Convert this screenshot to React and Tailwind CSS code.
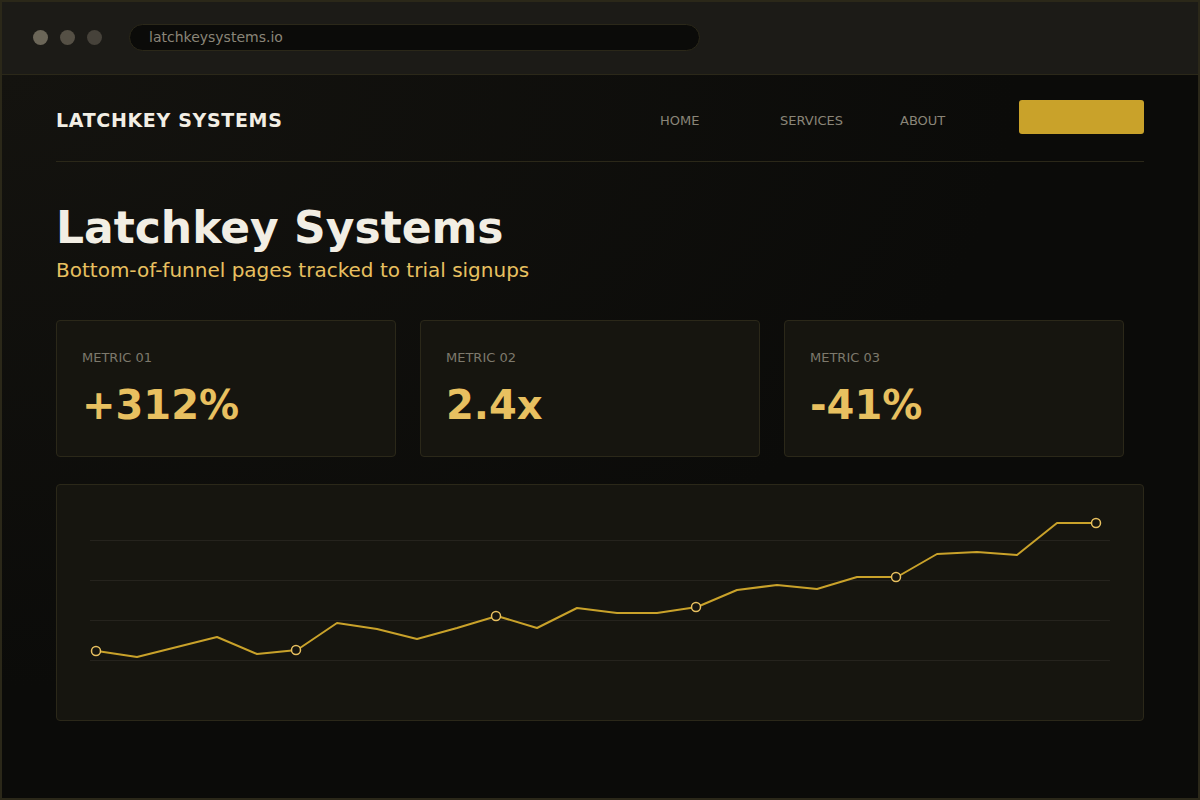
import React from 'react';

const FONT = { fontFamily: '"DejaVu Sans", "Liberation Sans", sans-serif' };

const NAV = ['HOME', 'SERVICES', 'ABOUT'];

const METRICS = [
  { label: 'METRIC 01', value: '+312%' },
  { label: 'METRIC 02', value: '2.4x' },
  { label: 'METRIC 03', value: '-41%' },
];

// signups per week, already in chart pixels (y grows downward)
const SERIES = [
  166, 172, 162, 152, 169, 165, 138, 144, 154, 143, 131, 143, 123,
  128, 128, 122, 105, 100, 104, 92, 92, 69, 67, 70, 38, 38,
];

function TrendChart() {
  const pts = SERIES.map((y, i) => [40 + i * 40, y]);
  const d = pts.map(([x, y], i) => `${i ? 'L' : 'M'}${x} ${y}`).join(' ');
  return (
    <svg width="1086" height="234" viewBox="0 0 1086 234" className="block">
      {[55, 95, 135, 175].map((y) => (
        <line key={y} x1="33" x2="1053" y1={y + 0.5} y2={y + 0.5} stroke="#25231d" strokeWidth="1" />
      ))}
      <path d={d} fill="none" stroke="#c9a22a" strokeWidth="2" strokeLinejoin="round" />
      {pts
        .filter((_, i) => i % 5 === 0)
        .map(([x, y]) => (
          <circle key={x} cx={x - 1} cy={y} r="4.5" fill="#16150f" stroke="#e8c060" strokeWidth="1.5" />
        ))}
    </svg>
  );
}

export default function App() {
  return (
    <div
      className="w-[1200px] h-[800px] overflow-hidden border-2 border-[#2b2819] bg-[#0b0b09] flex flex-col"
      style={FONT}
    >
      {/* browser chrome */}
      <div className="h-[73px] shrink-0 bg-[#1c1b17] border-b border-[#2b2819] flex items-center px-[31px] pb-[2px]">
        <div className="flex gap-[12px]">
          <span className="w-[15px] h-[15px] rounded-full bg-[#6b6658]" />
          <span className="w-[15px] h-[15px] rounded-full bg-[#555045]" />
          <span className="w-[15px] h-[15px] rounded-full bg-[#46423a]" />
        </div>
        <div className="ml-[27px] w-[571px] h-[27px] rounded-full bg-[#0b0b09] border border-[#2b2819] flex items-center pl-[19px] text-[14px] text-[#8a8578]">
          latchkeysystems.io
        </div>
      </div>

      <div className="flex-1 bg-[radial-gradient(ellipse_at_top_left,#14130f_0%,#0b0b09_60%)] px-[54px]">
        {/* site header */}
        <div className="flex items-center justify-between pt-[25px] pb-[26px] border-b border-[#2b2819]">
          <div className="pt-[6px] text-[19px] font-bold tracking-[0.035em] text-[#f2eee4]">LATCHKEY SYSTEMS</div>
          <div className="flex items-center">
            {NAV.map((n) => (
              <div key={n} className="w-[120px] pt-[6px] pl-px text-[13px] text-[#8a8578]">{n}</div>
            ))}
            <button className="w-[125px] h-[34px] rounded-[3px] bg-[#c9a22a]" />
          </div>
        </div>

        {/* hero */}
        <h1 className="mt-[39px] text-[44px] leading-[54px] font-bold text-[#f2eee4]">Latchkey Systems</h1>
        <p className="mt-[2px] text-[20px] leading-[26px] text-[#e8c060]">Bottom-of-funnel pages tracked to trial signups</p>

        {/* metrics */}
        <div className="mt-[37px] flex gap-[24px]">
          {METRICS.map((m) => (
            <div
              key={m.label}
              className="w-[340px] h-[137px] rounded-[4px] border border-[#2b2819] bg-[#16150f] px-[25px] pt-[29px]"
            >
              <div className="text-[13px] leading-[16px] text-[#7d796c]">{m.label}</div>
              <div className="mt-[15px] text-[40px] leading-[48px] font-bold text-[#e8c060]">{m.value}</div>
            </div>
          ))}
        </div>

        {/* trend */}
        <div className="mt-[27px] h-[237px] rounded-[4px] border border-[#2b2819] bg-[#16150f]">
          <TrendChart />
        </div>
      </div>
    </div>
  );
}
